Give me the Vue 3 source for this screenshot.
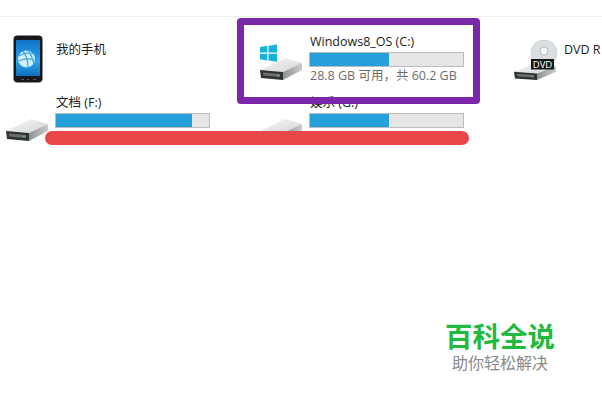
<script setup>
const rows = [
  { id: 'phone', type: 'phone', name: '我的手机' },
  { id: 'c', type: 'win', name: 'Windows8_OS (C:)', pct: 51.5, info: '28.8 GB 可用，共 60.2 GB' },
  { id: 'dvd', type: 'dvd', name: 'DVD R' },
  { id: 'f', type: 'disk', name: '文档 (F:)', pct: 89 },
  { id: 'g', type: 'disk', name: '娱乐 (G:)', pct: 51.5 },
]
</script>

<template>
  <main class="page">
    <section class="grid">
      <article v-for="item in rows" :key="item.id" class="tile" :class="'tile-' + item.type">
        <div class="icon">
          <svg v-if="item.type === 'phone'" width="30" height="48" viewBox="0 0 30 48">
            <defs>
              <linearGradient :id="'screen-' + item.id" x1="0" y1="0" x2="0" y2="1">
                <stop offset="0" stop-color="#1173c9" />
                <stop offset="0.6" stop-color="#2aa4ea" />
                <stop offset="1" stop-color="#0f6fbe" />
              </linearGradient>
            </defs>
            <rect x="0.5" y="0.5" width="29" height="47" rx="4" fill="#17181c" />
            <rect x="3" y="5" width="24" height="36" fill="url(#screen-phone)" />
            <circle cx="13.500" cy="24" r="8.500" fill="#d6eef9" />
            <path d="M6 21c5-3 10-4 15-2M5.500 26c5-2 11-3 16-1M10 16c3 4 5 9 5 16M15 15.500c3 4 5 8 6 13" fill="none" stroke="#3fa9e4" stroke-width="1.300" />
            <path d="M8 44.500h3M14 44.500h2M20 44.500h3" stroke="#55585c" stroke-width="1" />
          </svg>
          <svg v-else width="48" height="48" viewBox="0 0 48 48">
            <defs>
              <linearGradient :id="'side-' + item.id" x1="0" y1="0" x2="1" y2="0">
                <stop offset="0" stop-color="#8f9193" />
                <stop offset="1" stop-color="#c9cbcc" />
              </linearGradient>
              <linearGradient :id="'top-' + item.id" x1="0" y1="0" x2="1" y2="1">
                <stop offset="0" stop-color="#f6f6f6" />
                <stop offset="1" stop-color="#d4d6d7" />
              </linearGradient>
            </defs>
            <template v-if="item.type === 'dvd'">
              <circle cx="31" cy="19" r="13" fill="#dadee0" stroke="#c3c7ca" stroke-width="0.600" />
              <circle cx="31" cy="17" r="4" fill="#f4f5f6" stroke="#aab0b4" stroke-width="0.800" />
            </template>
            <g :transform="item.type === 'dvd' ? 'translate(0 8.300) scale(1 0.820)' : undefined">
              <path d="M1 36 L26 24 L43 29 L24 38 Z" :fill="`url(#top-${item.id})`" />
              <path d="M24 38 L43 29 L43 36 L24 46 Z" :fill="`url(#side-${item.id})`" />
              <path d="M1 36 L24 38 L24 46 L2 44 Z" fill="#2f3233" />
              <path d="M4 38.500 L21 40 L21 43 L4 41.500 Z" fill="#6b6e6f" />
              <circle cx="19" cy="41.500" r="0.900" fill="#54c46c" />
            </g>
            <path v-if="item.type === 'win'" transform="translate(1 10) scale(0.850)" d="M0 3.500 L8.500 2.200 L8.500 10 L0 10 Z M10 2 L20 0.500 L20 10 L10 10 Z M0 11.500 L8.500 11.500 L8.500 19.300 L0 18 Z M10 11.500 L20 11.500 L20 21 L10 19.500 Z" fill="#15b2da" />
            <template v-if="item.type === 'dvd'">
              <rect x="18" y="25" width="23" height="10.500" fill="#151618" />
              <text x="29.500" y="33.500" text-anchor="middle" class="dvd-label">DVD</text>
            </template>
          </svg>
        </div>
        <div class="body">
          <p class="name">{{ item.name }}</p>
          <div v-if="item.pct" class="bar"><span class="fill" :style="{ width: item.pct + '%' }"></span></div>
          <p v-if="item.info" class="info">{{ item.info }}</p>
        </div>
      </article>
    </section>

    <div class="mark-box"></div>
    <div class="mark-line"></div>

    <div class="brand">
      <strong>百科全说</strong>
      <span>助你轻松解决</span>
    </div>
  </main>
</template>

<style scoped>
.page {
  position: relative;
  width: 602px;
  height: 405px;
  overflow: hidden;
  background: #fff;
  font-family: "Open Sans", "Noto Sans CJK SC", sans-serif;
  color: #1c1c1c;
}

.page::before {
  content: "";
  display: block;
  height: 16px;
  border-bottom: 1px solid #eeeeee;
}

.grid {
  display: grid;
  grid-template-columns: 254px 254px 94px;
  grid-auto-rows: 60px;
  padding-top: 17px;
}

.tile {
  display: flex;
  align-items: flex-start;
}

.icon {
  flex: 0 0 55px;
  box-sizing: border-box;
  height: 60px;
  padding-left: 5px;
}

.tile-phone .icon {
  padding: 1px 0 0 13px;
}

.tile-disk .icon {
  padding-top: 1px;
}

.body {
  flex: 1;
  min-width: 0;
}

.tile-phone .body,
.tile-dvd .body {
  padding-top: 8px;
}

.tile-disk .body {
  padding-top: 1px;
}

.name {
  margin: 0;
  padding-left: 1px;
  font-size: 12.5px;
  line-height: 16px;
  white-space: nowrap;
}

.bar {
  width: 153px;
  height: 13px;
  margin-top: 2px;
  border: 1px solid #bcbcbc;
  background: #e6e6e6;
}

.fill {
  display: block;
  height: 100%;
  background: #26a0da;
}

.info {
  margin: 1px 0 0;
  padding-left: 1px;
  font-size: 12.5px;
  line-height: 16px;
  color: #6d6d6d;
  white-space: nowrap;
}

.dvd-label {
  font: 9.5px "Open Sans", sans-serif;
  fill: #fff;
}

.mark-box {
  position: absolute;
  left: 237px;
  top: 18px;
  width: 243px;
  height: 86px;
  box-sizing: border-box;
  border: 7px solid #7b27ab;
  border-radius: 4px;
}

.mark-line {
  position: absolute;
  left: 45px;
  top: 131px;
  width: 424px;
  height: 14px;
  border-radius: 7px;
  background: #e94649;
}

.brand {
  position: absolute;
  left: 445px;
  top: 322px;
  width: 110px;
  display: flex;
  flex-direction: column;
  align-items: center;
}

.brand strong {
  font-size: 27.5px;
  line-height: 30px;
  font-weight: 700;
  color: #1fba3e;
  white-space: nowrap;
}

.brand span {
  margin-top: 2px;
  font-size: 16px;
  line-height: 18px;
  color: #8a8a8a;
  white-space: nowrap;
}
</style>
<style>
html, body { background: #fff; }
</style>
